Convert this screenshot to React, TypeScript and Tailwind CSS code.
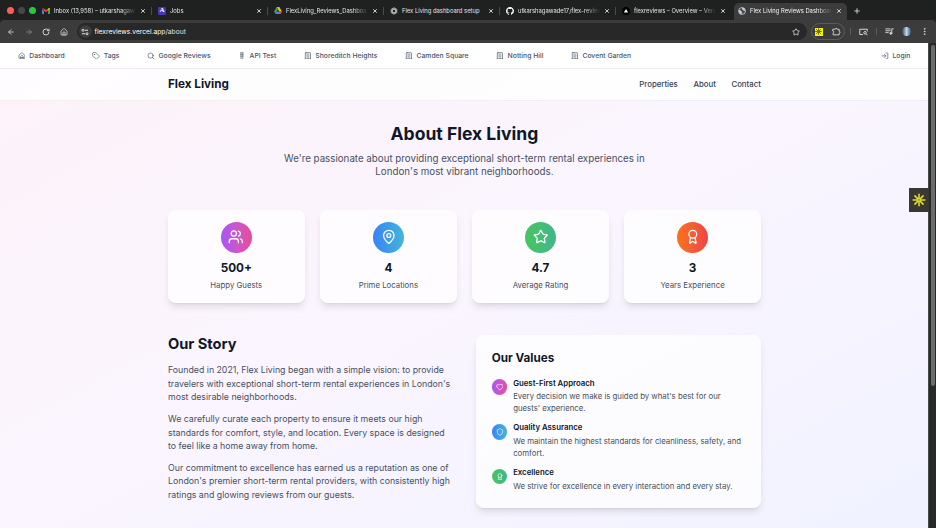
import type { ReactNode } from 'react';
import {
  ArrowLeft, ArrowRight, Award, EllipsisVertical, Heart, House, LogIn, MapPin, Plus,
  RotateCw, Search, Shield, Star, Tag, Users, X,
} from 'lucide-react';

const GmailIcon = () => (
  <svg viewBox="0 0 16 12" className="h-[6px] w-[8px]">
    <path d="M1 12h3V5.500L0 2.500V11a1 1 0 0 0 1 1z" fill="#4285f4" />
    <path d="M12 12h3a1 1 0 0 0 1-1V2.500l-4 3z" fill="#34a853" />
    <path d="M12 1.200v4.300l4-3V1.600C16 .2 14.400-.4 13.300.400z" fill="#fbbc04" />
    <path d="M4 5.500V1.200l4 3 4-3v4.300l-4 3z" fill="#ea4335" />
    <path d="M0 1.600v.9l4 3V1.200L2.700.400C1.600-.4 0 .2 0 1.600z" fill="#c5221f" />
  </svg>
);

const DriveIcon = () => (
  <svg viewBox="0 0 18 16" className="h-[7px] w-[8px]">
    <path d="M6 0h6l6 10.500h-6z" fill="#fbbc04" />
    <path d="M6 0l3 5.200L3 16 0 10.500z" fill="#34a853" />
    <path d="M6 10.500h12L15 16H3z" fill="#4285f4" />
    <path d="M12 10.500h6L15 16z" fill="#ea4335" />
  </svg>
);

const ChatIcon = () => (
  <svg viewBox="0 0 16 16" className="size-[8px]" fill="none" stroke="#c8c8c8" strokeWidth="1.500">
    <ellipse cx="8" cy="8" rx="3.400" ry="6.600" />
    <ellipse cx="8" cy="8" rx="3.400" ry="6.600" transform="rotate(60 8 8)" />
    <ellipse cx="8" cy="8" rx="3.400" ry="6.600" transform="rotate(120 8 8)" />
  </svg>
);

const GithubIcon = () => (
  <svg viewBox="0 0 16 16" className="size-[8px]" fill="#fff">
    <path d="M8 0C3.580 0 0 3.580 0 8c0 3.540 2.290 6.530 5.470 7.590.4.070.550-.170.550-.380 0-.190-.010-.820-.010-1.490-2.010.370-2.530-.490-2.690-.940-.090-.230-.480-.940-.820-1.130-.280-.150-.680-.520-.010-.530.630-.010 1.080.580 1.230.820.720 1.210 1.870.870 2.330.660.070-.520.280-.870.510-1.070-1.780-.2-3.640-.890-3.640-3.950 0-.870.310-1.590.820-2.150-.080-.2-.360-1.020.080-2.120 0 0 .670-.210 2.200.820a7.600 7.600 0 0 1 4 0c1.530-1.040 2.200-.820 2.200-.820.440 1.100.160 1.920.080 2.120.510.560.820 1.270.820 2.150 0 3.070-1.870 3.750-3.650 3.950.290.250.540.730.540 1.480 0 1.070-.010 1.930-.010 2.200 0 .210.150.460.550.380A8 8 0 0 0 16 8c0-4.420-3.580-8-8-8z" />
  </svg>
);

const VercelIcon = () => (
  <svg viewBox="0 0 16 16" className="size-[8px]">
    <circle cx="8" cy="8" r="8" fill="#000" />
    <path d="M8 4l4.200 7.200H3.800z" fill="#fff" />
  </svg>
);

const GlobeIcon = () => (
  <svg viewBox="0 0 16 16" className="size-[8px]">
    <circle cx="8" cy="8" r="7" fill="#4a4c50" stroke="#cfd3d9" strokeWidth="1.500" />
    <path d="M2 6c2-.500 3 .5 4 2s3 1 2 3-1 3-2 3.500C3.500 13.500 1.500 10 2 6zM8 1.500c3-.5 6 2 6.500 5-1 2-2.500 1-3.500 0S7.500 5.500 8 1.500z" fill="#cfd3d9" />
  </svg>
);

const JobsIcon = () => (
  <span className="flex size-[8px] items-center justify-center rounded-[1px] bg-[#4a35b5] font-['Liberation_Serif'] text-[7px] leading-none font-bold text-white">A</span>
);

const Burst = ({ className, color }: { className: string; color: string }) => (
  <svg viewBox="0 0 24 24" className={className} stroke={color} strokeWidth="2.700" strokeLinecap="round">
    <path d="M12 2v7M12 15v7M2 12h7M15 12h7M5 5l5 5M14 14l5 5M5 19l5-5M14 10l5-5" />
    <circle cx="12" cy="12" r="1.500" fill={color} stroke="none" />
  </svg>
);

const line = { fill: 'none', stroke: 'currentColor', strokeLinecap: 'round', strokeLinejoin: 'round' } as const;

const DashboardIcon = ({ className }: { className: string }) => (
  <svg viewBox="0 0 24 24" className={className} strokeWidth="2" {...line}>
    <path d="M3 10.500a2 2 0 0 1 .8-1.600l7-5.600a2 2 0 0 1 2.400 0l7 5.600a2 2 0 0 1 .8 1.600V19a2 2 0 0 1-2 2H5a2 2 0 0 1-2-2z" />
    <path d="M8 20v-6.500l4-3 4 3V20M8 17h8" />
  </svg>
);

const TubeIcon = ({ className }: { className: string }) => (
  <svg viewBox="0 0 24 24" className={className} strokeWidth="2" {...line}>
    <path d="M8.500 2.500h7M9 2.500V19a3 3 0 0 0 6 0V2.500M9 8h6M9 13h6" />
  </svg>
);

const BuildingIcon = ({ className }: { className: string }) => (
  <svg viewBox="0 0 24 24" className={className} strokeWidth="2" {...line}>
    <path d="M6 2h12a2 2 0 0 1 2 2v18H4V4a2 2 0 0 1 2-2zM2.500 22h19" />
    <path d="M8.500 6.500h7M8.500 10h7M8.500 13.500h7M9 18h6v4" strokeWidth="1.500" />
  </svg>
);

const PuzzleIcon = () => (
  <svg viewBox="0 0 24 24" className="size-[9px]" strokeWidth="2.500" {...line}>
    <path d="M3 6h5.500a2.500 2.500 0 0 1 5 0H19v5.500a2.500 2.500 0 0 1 0 5V21H3v-5a2.600 2.600 0 0 0 0-5z" />
  </svg>
);

const PlaylistIcon = () => (
  <svg viewBox="0 0 24 24" className="ml-[8px] size-[9px]" strokeWidth="2.500" {...line}>
    <path d="M2 5h12M2 10h12M2 15h7M18 17V5h4" />
    <circle cx="15.500" cy="17" r="2.500" fill="currentColor" />
  </svg>
);

const tabs: { icon: ReactNode; title: string }[] = [
  { icon: <GmailIcon />, title: 'Inbox (13,958) – utkarshagaw' },
  { icon: <JobsIcon />, title: 'Jobs' },
  { icon: <DriveIcon />, title: 'FlexLiving_Reviews_Dashboa' },
  { icon: <ChatIcon />, title: 'Flex Living dashboard setup' },
  { icon: <GithubIcon />, title: 'utkarshagawade17/flex-review' },
  { icon: <VercelIcon />, title: 'flexreviews – Overview – Verc' },
];

function TabBody({ icon, title, fade = true }: { icon: ReactNode; title: string; fade?: boolean }) {
  return (
    <>
      <span className="flex w-[8px] shrink-0 justify-center">{icon}</span>
      <span className={`ml-[4px] w-[82px] whitespace-nowrap ${fade ? '[mask-image:linear-gradient(to_right,black_82%,transparent)]' : ''}`}>{title}</span>
      <X className="ml-[4px] size-[6px] shrink-0 text-[#e2e2e2]" strokeWidth={3.500} />
    </>
  );
}

function TabStrip() {
  return (
    <div className="flex h-[20px] shrink-0 items-center bg-[#1f2120] pt-[1px] text-[5.830px] leading-[10px] text-[#e4e4e4]">
      <div className="flex w-[42px] shrink-0 gap-[4.500px] pl-[7px]">
        <span className="size-[6.500px] rounded-full bg-[#fe5f57]" />
        <span className="size-[6.500px] rounded-full bg-[#464746]" />
        <span className="size-[6.500px] rounded-full bg-[#28c840]" />
      </div>
      {tabs.map((t, i) => (
        <div key={t.title} className="flex w-[116px] shrink-0 items-center">
          <TabBody {...t} fade={i !== 3} />
          {i < 5 && <span className="ml-[5px] h-[8px] w-px bg-[#4a4b4a]" />}
        </div>
      ))}
      <div className="-ml-[4px] flex h-[17px] w-[113px] shrink-0 items-center self-end rounded-t-[5px] bg-[#3c3c3c] pb-[2px] pl-[4px] text-[#f4f4f4]">
        <TabBody icon={<GlobeIcon />} title="Flex Living Reviews Dashboar" />
      </div>
      <Plus className="ml-[6px] size-[8px] text-[#e2e2e2]" strokeWidth={2.500} />
    </div>
  );
}

function Toolbar() {
  return (
    <div className="flex h-[23px] shrink-0 items-center rounded-t-[4px] bg-[#3c3c3c] text-[#d6d6d6]">
      <ArrowLeft className="ml-[7px] size-[8px]" strokeWidth={2.500} />
      <ArrowRight className="ml-[9.500px] size-[8px] text-[#858585]" strokeWidth={2.500} />
      <RotateCw className="ml-[9.500px] size-[8px]" strokeWidth={2.800} />
      <House className="ml-[9.500px] size-[8px]" strokeWidth={2.500} />
      <div className="ml-[9px] flex h-[17px] w-[730px] items-center rounded-full bg-[#282828]">
        <span className="ml-[2px] flex size-[13px] items-center justify-center rounded-full bg-[#3c3c3c]">
          <svg viewBox="0 0 16 16" className="size-[8px]" fill="none" stroke="#e2e2e2" strokeWidth="2">
            <circle cx="4" cy="4.500" r="2" /><path d="M8 4.500h6M2 11.500h6" /><circle cx="12" cy="11.500" r="2" />
          </svg>
        </span>
        <span className="ml-[3px] pt-[1px] text-[6.700px] text-[#e0e0e0]"><span className="text-white">flexreviews.vercel.app</span>/about</span>
        <Star className="mr-[7px] ml-auto size-[8px]" strokeWidth={2.500} />
      </div>
      <div className="ml-[4px] flex h-[17px] w-[34px] items-center justify-center gap-[9px] rounded-full border border-[#5e5e5e]">
        <span className="flex size-[8px] items-center justify-center bg-[#f3f312]"><Burst className="size-[7px]" color="#4b4b10" /></span>
        <PuzzleIcon />
      </div>
      <span className="ml-[5px] h-[7px] w-px bg-[#5e5e5e]" />
      <svg viewBox="0 0 18 16" className="ml-[8px] h-[8px] w-[9px]" fill="none" stroke="currentColor" strokeWidth="2">
        <path d="M8 13H1.500V2.500h15V7" /><circle cx="12" cy="9.500" r="2.500" /><path d="M14 11.500l3 3" />
      </svg>
      <span className="ml-[8px] h-[7px] w-px bg-[#5e5e5e]" />
      <PlaylistIcon />
      <span className="ml-[8px] size-[9px] rounded-full bg-linear-to-r from-[#2c4964] via-[#c5d8e8] to-[#2d5b86]" />
      <EllipsisVertical className="ml-[9px] size-[9px]" strokeWidth={2.500} />
    </div>
  );
}

const links = [
  { Icon: DashboardIcon, label: 'Dashboard' },
  { Icon: Tag, label: 'Tags' },
  { Icon: Search, label: 'Google Reviews' },
  { Icon: TubeIcon, label: 'API Test' },
  { Icon: BuildingIcon, label: 'Shoreditch Heights' },
  { Icon: BuildingIcon, label: 'Camden Square' },
  { Icon: BuildingIcon, label: 'Notting Hill' },
  { Icon: BuildingIcon, label: 'Covent Garden' },
];

const stats = [
  { Icon: Users, value: '500+', label: 'Happy Guests', tone: 'from-[#a855f7] to-[#ec4899]' },
  { Icon: MapPin, value: '4', label: 'Prime Locations', tone: 'from-[#3b82f6] to-[#45b5d6]' },
  { Icon: Star, value: '4.7', label: 'Average Rating', tone: 'from-[#48c55c] to-[#42b68b]' },
  { Icon: Award, value: '3', label: 'Years Experience', tone: 'from-[#f97316] to-[#ef4444]' },
];

const story = [
  'Founded in 2021, Flex Living began with a simple vision: to provide travelers with exceptional short-term rental experiences in London\'s most desirable neighborhoods.',
  'We carefully curate each property to ensure it meets our high standards for comfort, style, and location. Every space is designed to feel like a home away from home.',
  'Our commitment to excellence has earned us a reputation as one of London\'s premier short-term rental providers, with consistently high ratings and glowing reviews from our guests.',
];

const values = [
  { Icon: Heart, title: 'Guest-First Approach', text: "Every decision we make is guided by what's best for our guests' experience.", tone: 'from-[#a855f7] to-[#ec4899]' },
  { Icon: Shield, title: 'Quality Assurance', text: 'We maintain the highest standards for cleanliness, safety, and comfort.', tone: 'from-[#3b82f6] to-[#45b5d6]' },
  { Icon: Award, title: 'Excellence', text: 'We strive for excellence in every interaction and every stay.', tone: 'from-[#48c55c] to-[#42b68b]' },
];

const cardStyle = 'rounded-[7.800px] bg-white/70 shadow-[0_5px_7px_-1.500px_rgba(0,0,0,0.1),0_2px_3px_-2px_rgba(0,0,0,0.12)]';

export default function App() {
  return (
    <div className="flex h-[528px] w-[936px] flex-col overflow-hidden bg-[#1f2120] font-['Inter',sans-serif] [--spacing:1.95px]">
      <TabStrip />
      <Toolbar />
      <div className="flex min-h-0 flex-1">
        <div className="flex w-[928px] shrink-0 flex-col overflow-hidden bg-linear-to-br from-[#fdf2f8] via-[#faf5ff] to-[#f0f2ff]">
          <nav className="flex h-[25.850px] shrink-0 items-center gap-14 border-b border-[#e9ebef] bg-white px-9 text-[6.825px] font-medium text-[#475569]">
            {links.map(({ Icon, label }) => (
              <span key={label} className="flex items-center gap-2"><Icon className="size-4" /><span className="pt-[1px]">{label}</span></span>
            ))}
            <span className="ml-auto flex items-center gap-2"><LogIn className="size-4" /><span className="pt-[1px]">Login</span></span>
          </nav>
          <header className="h-[31.700px] shrink-0 border-b border-[#f1eef4] bg-white/80">
            <div className="mx-auto flex h-full w-[624px] items-center justify-between pt-[2px] pr-[15.200px] pl-[16px]">
              <span className="text-[11.700px] font-bold text-[#0f172a]">Flex Living</span>
              <div className="flex gap-8 text-[7.800px] font-medium text-[#374151]"><span>Properties</span><span>About</span><span>Contact</span></div>
            </div>
          </header>
          <main className="mx-auto w-[624px] pt-[23.900px] pr-[15.200px] pl-[16px] text-[#475161]">
            <div className="mb-[30.800px] text-center">
              <h1 className="mb-4 text-[17.550px] leading-10 font-bold text-[#0f172a]">About Flex Living</h1>
              <p className="mx-auto w-[374.400px] text-[9.750px] leading-7">We're passionate about providing exceptional short-term rental experiences in London's most vibrant neighborhoods.</p>
            </div>
            <div className="mb-16 grid grid-cols-4 gap-8">
              {stats.map(({ Icon, value, label, tone }) => (
                <div key={label} className={`flex flex-col items-center p-6 ${cardStyle}`}>
                  <span className={`mb-4 flex size-16 items-center justify-center rounded-full bg-linear-to-r text-white ${tone}`}><Icon className="size-8" /></span>
                  <span className="mb-[3.100px] pt-[0.800px] text-[11.700px] leading-8 font-bold text-[#0f172a]">{value}</span>
                  <span className="pt-[0.400px] text-[7.800px] leading-[11.300px]">{label}</span>
                </div>
              ))}
            </div>
            <div className="grid grid-cols-2 items-start gap-12">
              <section>
                <h2 className="mb-[10.900px] pt-[1.100px] text-[14.625px] leading-9 font-bold text-[#0f172a]">Our Story</h2>
                <div className="flex flex-col gap-4 text-[8.775px] leading-7">{story.map((p) => <p key={p}>{p}</p>)}</div>
              </section>
              <section className={`p-8 ${cardStyle}`}>
                <h3 className="mb-[11.400px] pt-[0.400px] text-[11.700px] leading-8 font-bold text-[#0f172a]">Our Values</h3>
                <div className="flex flex-col gap-4 text-[7.800px] leading-6">
                  {values.map(({ Icon, title, text, tone }) => (
                    <div key={title} className="flex items-start gap-3">
                      <span className={`mt-[1.600px] flex size-8 shrink-0 items-center justify-center rounded-full bg-linear-to-r text-white ${tone}`}><Icon className="size-4" /></span>
                      <div>
                        <h4 className="mb-1 font-semibold text-[#0f172a]">{title}</h4>
                        <p>{text}</p>
                      </div>
                    </div>
                  ))}
                </div>
              </section>
            </div>
          </main>
        </div>
        <div className="w-[8px] border-l border-[#4a4a4a] bg-[#282a29] pt-[2px] pl-[2px]">
          <div className="h-[341px] w-[4px] rounded-full bg-[#6b6b6b]" />
        </div>
      </div>
      <div className="absolute top-[188px] left-[909px] flex h-[24px] w-[20px] items-center justify-center bg-[#3a3833]">
        <Burst className="size-[14px]" color="#dce02a" />
      </div>
    </div>
  );
}
